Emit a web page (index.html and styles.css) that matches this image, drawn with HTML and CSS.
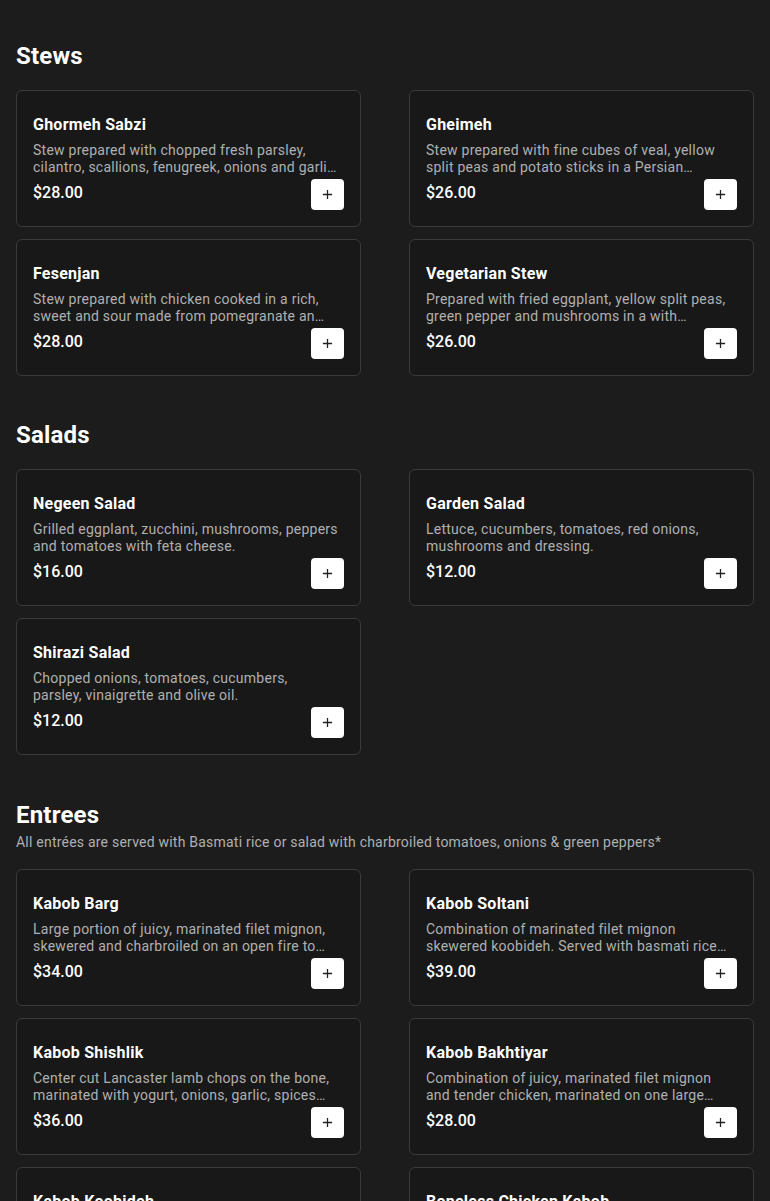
FILE: index.html
```html
<!DOCTYPE html>
<html lang="en">
<head>
<meta charset="utf-8">
<title>Menu</title>
<link rel="stylesheet" href="styles.css">
</head>
<body>
<main class="menu">
  <section class="section">
    <header class="section-head"><h2 class="section-title">Stews</h2></header>
    <div class="grid">
      <article class="card">
        <h3 class="item-name">Ghormeh Sabzi</h3>
        <p class="item-desc">Stew prepared with chopped fresh parsley, cilantro, scallions, fenugreek, onions and garli…</p>
        <div class="item-foot"><span class="price">$28.00</span><button class="add" aria-label="Add"><svg viewBox="0 0 12 12" width="11" height="11"><path d="M6 1v10M1 6h10"/></svg></button></div>
      </article>
      <article class="card">
        <h3 class="item-name">Gheimeh</h3>
        <p class="item-desc">Stew prepared with fine cubes of veal, yellow split peas and potato sticks in a Persian…</p>
        <div class="item-foot"><span class="price">$26.00</span><button class="add" aria-label="Add"><svg viewBox="0 0 12 12" width="11" height="11"><path d="M6 1v10M1 6h10"/></svg></button></div>
      </article>
      <article class="card">
        <h3 class="item-name">Fesenjan</h3>
        <p class="item-desc">Stew prepared with chicken cooked in a rich, sweet and sour made from pomegranate an…</p>
        <div class="item-foot"><span class="price">$28.00</span><button class="add" aria-label="Add"><svg viewBox="0 0 12 12" width="11" height="11"><path d="M6 1v10M1 6h10"/></svg></button></div>
      </article>
      <article class="card">
        <h3 class="item-name">Vegetarian Stew</h3>
        <p class="item-desc">Prepared with fried eggplant, yellow split peas, green pepper and mushrooms in a with…</p>
        <div class="item-foot"><span class="price">$26.00</span><button class="add" aria-label="Add"><svg viewBox="0 0 12 12" width="11" height="11"><path d="M6 1v10M1 6h10"/></svg></button></div>
      </article>
    </div>
  </section>

  <section class="section">
    <header class="section-head"><h2 class="section-title">Salads</h2></header>
    <div class="grid">
      <article class="card">
        <h3 class="item-name">Negeen Salad</h3>
        <p class="item-desc">Grilled eggplant, zucchini, mushrooms, peppers and tomatoes with feta cheese.</p>
        <div class="item-foot"><span class="price">$16.00</span><button class="add" aria-label="Add"><svg viewBox="0 0 12 12" width="11" height="11"><path d="M6 1v10M1 6h10"/></svg></button></div>
      </article>
      <article class="card">
        <h3 class="item-name">Garden Salad</h3>
        <p class="item-desc">Lettuce, cucumbers, tomatoes, red onions, mushrooms and dressing.</p>
        <div class="item-foot"><span class="price">$12.00</span><button class="add" aria-label="Add"><svg viewBox="0 0 12 12" width="11" height="11"><path d="M6 1v10M1 6h10"/></svg></button></div>
      </article>
      <article class="card">
        <h3 class="item-name">Shirazi Salad</h3>
        <p class="item-desc">Chopped onions, tomatoes, cucumbers, parsley, vinaigrette and olive oil.</p>
        <div class="item-foot"><span class="price">$12.00</span><button class="add" aria-label="Add"><svg viewBox="0 0 12 12" width="11" height="11"><path d="M6 1v10M1 6h10"/></svg></button></div>
      </article>
    </div>
  </section>

  <section class="section section--noted">
    <header class="section-head">
      <h2 class="section-title">Entrees</h2>
      <p class="section-note">All entrées are served with Basmati rice or salad with charbroiled tomatoes, onions &amp; green peppers*</p>
    </header>
    <div class="grid">
      <article class="card">
        <h3 class="item-name">Kabob Barg</h3>
        <p class="item-desc">Large portion of juicy, marinated filet mignon, skewered and charbroiled on an open fire to…</p>
        <div class="item-foot"><span class="price">$34.00</span><button class="add" aria-label="Add"><svg viewBox="0 0 12 12" width="11" height="11"><path d="M6 1v10M1 6h10"/></svg></button></div>
      </article>
      <article class="card">
        <h3 class="item-name">Kabob Soltani</h3>
        <p class="item-desc">Combination of marinated filet mignon skewered koobideh. Served with basmati rice…</p>
        <div class="item-foot"><span class="price">$39.00</span><button class="add" aria-label="Add"><svg viewBox="0 0 12 12" width="11" height="11"><path d="M6 1v10M1 6h10"/></svg></button></div>
      </article>
      <article class="card">
        <h3 class="item-name">Kabob Shishlik</h3>
        <p class="item-desc">Center cut Lancaster lamb chops on the bone, marinated with yogurt, onions, garlic, spices…</p>
        <div class="item-foot"><span class="price">$36.00</span><button class="add" aria-label="Add"><svg viewBox="0 0 12 12" width="11" height="11"><path d="M6 1v10M1 6h10"/></svg></button></div>
      </article>
      <article class="card">
        <h3 class="item-name">Kabob Bakhtiyar</h3>
        <p class="item-desc">Combination of juicy, marinated filet mignon and tender chicken, marinated on one large…</p>
        <div class="item-foot"><span class="price">$28.00</span><button class="add" aria-label="Add"><svg viewBox="0 0 12 12" width="11" height="11"><path d="M6 1v10M1 6h10"/></svg></button></div>
      </article>
      <article class="card">
        <h3 class="item-name">Kabob Koobideh</h3>
        <p class="item-desc">Two skewers of seasoned ground beef, charbroiled on an open fire.</p>
        <div class="item-foot"><span class="price">$24.00</span><button class="add" aria-label="Add"><svg viewBox="0 0 12 12" width="11" height="11"><path d="M6 1v10M1 6h10"/></svg></button></div>
      </article>
      <article class="card">
        <h3 class="item-name">Boneless Chicken Kabob</h3>
        <p class="item-desc">Tender boneless chicken breast marinated in saffron, lemon and onions.</p>
        <div class="item-foot"><span class="price">$26.00</span><button class="add" aria-label="Add"><svg viewBox="0 0 12 12" width="11" height="11"><path d="M6 1v10M1 6h10"/></svg></button></div>
      </article>
    </div>
  </section>
</main>
</body>
</html>
```

FILE: styles.css
```css
* { box-sizing: border-box; }
html, body {
  margin: 0;
  padding: 0;
  background: #1c1c1c;
  color: #ffffff;
  font-family: Roboto, "Liberation Sans", Arial, sans-serif;
}
.menu {
  padding: 0 16px 40px;
}
.section {
  padding-top: 43px;
}
.section:first-child {
  padding-top: 40px;
}
.section--noted {
  padding-top: 44px;
}
.section-head {
  margin-bottom: 18px;
}
.section--noted .section-head {
  margin-bottom: 17px;
}
.section-title {
  margin: 0;
  font-size: 24px;
  line-height: 32px;
  font-weight: 700;
  letter-spacing: 0.2px;
  color: #ffffff;
}
.section-note {
  margin: 1px 0 0;
  font-size: 14px;
  line-height: 20px;
  letter-spacing: 0.22px;
  color: #b0b0b0;
}
.grid {
  display: grid;
  grid-template-columns: 1fr 1fr;
  column-gap: 48px;
  row-gap: 12px;
}
.card {
  background: #181818;
  border: 1px solid #3a3a3a;
  border-radius: 6px;
  padding: 22px 16px 16px;
  display: flex;
  flex-direction: column;
}
.item-name {
  margin: 0;
  font-size: 16px;
  line-height: 24px;
  font-weight: 700;
  letter-spacing: 0.25px;
  color: #ffffff;
}
.item-desc {
  margin: 5px 0 0;
  padding-right: 5px;
  font-size: 14px;
  line-height: 17px;
  letter-spacing: 0.25px;
  color: #b0b0b0;
  display: -webkit-box;
  -webkit-box-orient: vertical;
  -webkit-line-clamp: 2;
  overflow: hidden;
  height: 34px;
}
.item-foot {
  margin-top: 3px;
  display: flex;
  justify-content: space-between;
  align-items: flex-start;
}
.price {
  padding-top: 2px;
  font-size: 16px;
  line-height: 24px;
  font-weight: 500;
  color: #ffffff;
}
.add {
  width: 33px;
  height: 31px;
  border: none;
  border-radius: 4px;
  background: #ffffff;
  padding: 0;
  display: flex;
  align-items: center;
  justify-content: center;
  cursor: pointer;
}
.add svg path {
  stroke: #222222;
  stroke-width: 1.4;
  fill: none;
}
```
